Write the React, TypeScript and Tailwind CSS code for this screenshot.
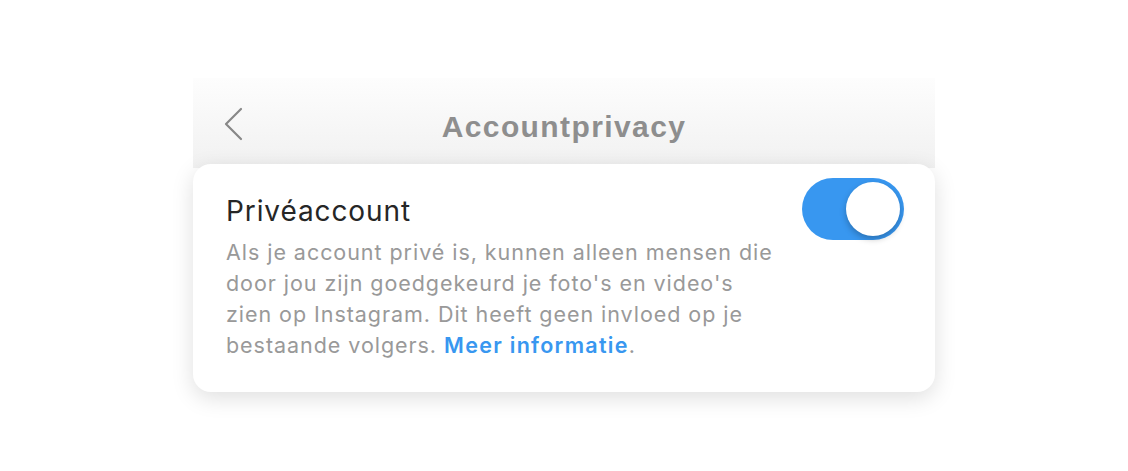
import React from "react";

export default function App() {
  return (
    <div className="w-[1128px] h-[471px] bg-white overflow-hidden" style={{ fontFamily: "Inter, 'Noto Sans', sans-serif" }}>
      <div className="mx-auto w-[742px] pt-[78px]">
        <div className="relative h-[90px] bg-gradient-to-b from-[#fdfdfd] to-[#f1f1f1] flex items-center justify-center">
          <svg className="absolute left-[30px] top-[29px]" width="22" height="36" viewBox="0 0 22 36" fill="none">
            <path d="M18 2 L3 17 L18 32" stroke="#888888" strokeWidth="2.2" strokeLinecap="round" strokeLinejoin="round" />
          </svg>
          <h1
            className="text-[30px] font-bold text-[#8e8e8e] tracking-[1.4px] mt-[6px]"
            style={{ fontFamily: "'Liberation Sans', Arial, sans-serif" }}
          >
            Accountprivacy
          </h1>
        </div>
        <div className="relative -mt-[4px] bg-white rounded-[18px] shadow-[0_6px_22px_rgba(0,0,0,0.13)] pl-[33px] pr-[31px] pt-[14px] pb-[31px] flex justify-between">
          <div className="w-[552px] pt-[16px]">
            <div className="text-[28px] leading-[34px] text-[#262626] tracking-[0.9px]">Privéaccount</div>
            <p className="mt-[9px] text-[21.5px] leading-[31px] text-[#999999] tracking-[0.95px]">
              Als je account privé is, kunnen alleen mensen die door jou zijn goedgekeurd je foto's en video's zien op Instagram. Dit heeft geen invloed op je bestaande volgers.{" "}
              <span className="text-[#3897f0] font-semibold tracking-[1.3px]">Meer informatie</span>.
            </p>
          </div>
          <div className="relative w-[102px] h-[62px] rounded-full bg-[#3897f0] shrink-0">
            <div className="absolute right-[4px] top-[4px] w-[54px] h-[54px] rounded-full bg-white shadow-[0_3px_6px_rgba(0,0,0,0.25)]" />
          </div>
        </div>
      </div>
    </div>
  );
}
